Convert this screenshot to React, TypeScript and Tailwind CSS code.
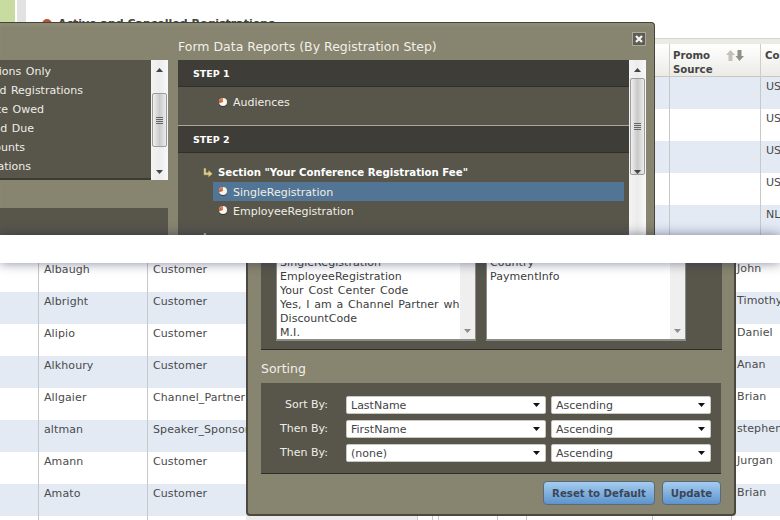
import React from "react";

function Pie() {
  return (
    <svg width="8" height="9" viewBox="0 0 8 9" className="shrink-0">
      <circle cx="4" cy="5" r="4" fill="#22211c" opacity="0.6" />
      <circle cx="4" cy="4" r="4" fill="#f8f6f0" />
      <path d="M4 4 L4 0 A4 4 0 0 0 0.2 5.2 Z" fill="#c9653a" />
      <path d="M4 4 L4 0 A4 4 0 0 0 0.9 1.5 Z" fill="#d97f52" />
    </svg>
  );
}

function CornerArrow() {
  return (
    <svg width="10" height="10" viewBox="0 0 10 10" className="shrink-0">
      <path d="M0.5 0 H3.2 V4.2 H5.2 V1.8 L9.8 5.8 L5.2 9.8 V7.2 H0.5 Z" fill="#d8c988" stroke="#4f4b36" strokeWidth="0.5" />
    </svg>
  );
}

function Tri({ up, color = "#555" }: { up?: boolean; color?: string }) {
  return (
    <svg width="7" height="4" viewBox="0 0 7 4">
      <path d={up ? "M3.5 0 L7 4 H0 Z" : "M0 0 H7 L3.5 4 Z"} fill={color} />
    </svg>
  );
}

function Scrollbar({ thumbTop, thumbH }: { thumbTop: number; thumbH: number }) {
  return (
    <div className="relative w-[17px] shrink-0 self-stretch bg-gradient-to-r from-[#f4f4f4] via-[#ececec] to-[#f8f8f8]">
      <div className="absolute left-[5px] top-[8px]">
        <Tri up color="#444" />
      </div>
      <div
        className="absolute left-[1px] flex w-[15px] flex-col items-center justify-center gap-[1px] rounded-[2px] border border-[#9b9b9b] bg-gradient-to-r from-[#f0f0f0] via-[#c9c9c9] to-[#ececec]"
        style={{ top: thumbTop, height: thumbH }}
      >
        <div className="h-px w-[7px] bg-[#666]" />
        <div className="h-px w-[7px] bg-[#666]" />
        <div className="h-px w-[7px] bg-[#666]" />
        <div className="h-px w-[7px] bg-[#666]" />
      </div>
      <div className="absolute left-[5px] top-[110px]">
        <Tri color="#444" />
      </div>
    </div>
  );
}

function SortArrows() {
  return (
    <svg width="18" height="11" viewBox="0 0 18 11" className="mt-[1px] shrink-0">
      <path d="M4.5 0 L9 5 H6.5 V11 H2.5 V5 H0 Z" fill="#c2c2b8" />
      <path d="M11.5 0 H15.5 V6 H18 L13.5 11 L9.5 6 H11.5 Z" fill="#8f8f88" />
    </svg>
  );
}

const leftItems: [string, string][] = [
  ["Active Registrations Only", "w-[51px]"],
  ["Cancelled Registrations", "w-[83px]"],
  ["Balance Owed", "w-[44px]"],
  ["Refund Due", "w-[34px]"],
  ["Discounts", "w-[25px]"],
  ["Cancellations", "w-[31px]"],
];

function TopTable() {
  const rows = ["US", "US", "US", "US", "NL", ""];
  return (
    <div className="ml-auto mt-[38px] w-[125px] shrink-0 text-[#4a4a4a]">
      <div className="h-[6px] border-t border-[#d6d6ce] bg-[#ebebe6]" />
      <div className="grid h-[33px] grid-cols-[15px_91px_1fr] border-b border-[#c8c8c0] bg-gradient-to-b from-white to-[#ecebe6] text-[10.2px] font-bold leading-[14px] text-[#444]">
        <div className="border-r border-[#cfcfc8]" />
        <div className="flex items-start justify-between border-r border-[#cfcfc8] pl-[3px] pr-[16px] pt-[5px]">
          <span className="w-[50px]">Promo Source</span>
          <SortArrows />
        </div>
        <div className="overflow-hidden pl-[4px] pt-[5px]">Country</div>
      </div>
      {rows.map((r, i) => (
        <div key={i} className={`grid h-[32px] grid-cols-[15px_91px_1fr] ${i % 2 === 0 ? "bg-[#e3eaf4]" : "bg-white"}`}>
          <div className="border-r border-[#c8c8c8]" />
          <div className="border-r border-[#c8c8c8]" />
          <div className="pl-[5px] pt-[3px]">{r}</div>
        </div>
      ))}
    </div>
  );
}

function TopModal() {
  return (
    <div className="absolute left-0 top-[22px] flex h-[213px] w-[655px] gap-[10px] rounded-tr-[4px] border-r border-t border-[#45443a] bg-[#87846f] pr-[8px] shadow-[inset_0_3px_3px_rgba(255,255,255,0.06)]">
      <button className="absolute right-[8px] top-[9px] flex h-[14px] w-[14px] items-center justify-center border border-[#aaa89a] bg-[#5f5d53]">
        <svg width="8" height="8" viewBox="0 0 8 8">
          <path d="M1 1 L7 7 M7 1 L1 7" stroke="#f2f2ee" strokeWidth="2.4" />
        </svg>
      </button>
      <div className="flex w-[168px] shrink-0 flex-col pt-[37px]">
        <div className="flex h-[120px] shrink-0 bg-white">
          <div className="flex-1 border-b-2 border-[#3c3b34] bg-[#58554b] pt-[2px] text-[#efeee6] [word-spacing:1px]">
            {leftItems.map(([t, w]) => (
              <div key={t} className={`flex h-[19px] items-center justify-end whitespace-nowrap ${w}`}>
                {t}
              </div>
            ))}
          </div>
          <Scrollbar thumbTop={33} thumbH={54} />
        </div>
        <div className="mt-[28px] flex-1 bg-[#58554b]" />
      </div>
      <div className="flex min-w-0 flex-1 flex-col">
        <div className="h-[37px] shrink-0 pt-[17px] text-[12.5px] leading-[14px] text-[#f1f0e8]">
          Form Data Reports (By Registration Step)
        </div>
        <div className="flex min-h-0 flex-1">
          <div className="min-w-0 flex-1 overflow-hidden bg-[#58554b] text-[#efeee6]">
            <div className="flex h-[27px] items-center border-b border-[#312f2a] bg-[#3f3d37] pl-[15px] text-[9.5px] font-bold text-white">STEP 1</div>
            <div className="flex h-[38px] items-center gap-[6px] pb-[8px] pl-[41px]">
              <Pie />
              <span>Audiences</span>
            </div>
            <div className="h-px bg-[#a9a799]" />
            <div className="flex h-[27px] items-center border-b border-[#312f2a] bg-[#3f3d37] pl-[15px] text-[9.5px] font-bold text-white">STEP 2</div>
            <div className="mt-[10px] flex h-[19px] items-center gap-[5px] pl-[25px] text-[10.2px] font-bold text-white">
              <CornerArrow />
              <span>Section "Your Conference Registration Fee"</span>
            </div>
            <div className="ml-[35px] mr-[5px] flex h-[19px] items-center gap-[6px] bg-[#527595] pl-[6px]">
              <Pie />
              <span className="pt-[1px]">SingleRegistration</span>
            </div>
            <div className="ml-[35px] mr-[5px] flex h-[19px] items-center gap-[6px] pl-[6px]">
              <Pie />
              <span className="pt-[1px]">EmployeeRegistration</span>
            </div>
            <div className="mt-[13px] pl-[25px]">
              <CornerArrow />
            </div>
          </div>
          <Scrollbar thumbTop={18} thumbH={97} />
        </div>
      </div>
    </div>
  );
}

const colClass = ["w-[39px]", "w-[109px]", "w-[270px]", "w-[15px]", "w-[6px]", "w-[59px]", "w-[29px]", "w-[126px]", "w-[79px]", "w-[48px]"];

const people = [
  ["Albaugh", "Customer", "John"],
  ["Albright", "Customer", "Timothy"],
  ["Alipio", "Customer", "Daniel"],
  ["Alkhoury", "Customer", "Anan"],
  ["Allgaier", "Channel_Partner", "Brian"],
  ["altman", "Speaker_Sponsor", "stephen"],
  ["Amann", "Customer", "Jurgan"],
  ["Amato", "Customer", "Brian"],
  ["", "", ""],
];

function BottomTable() {
  return (
    <div className="-mt-[3px] text-[#4a4a4a] tracking-[0.1px]">
      {people.map((p, i) => (
        <div key={i} className={`flex h-[32px] ${i % 2 === 1 ? "bg-[#e3eaf4]" : "bg-white"}`}>
          {colClass.map((c, j) => (
            <div key={j} className={`${c} shrink-0 overflow-hidden whitespace-nowrap ${j < 9 ? "border-r border-[#c8c8c8]" : ""} ${j === 9 ? "pl-[5px] pt-[2px]" : "pl-[5px] pt-[3px]"}`}>
              {j === 1 ? p[0] : j === 2 ? p[1] : j === 9 ? p[2] : ""}
            </div>
          ))}
        </div>
      ))}
    </div>
  );
}

function ListBox({ items }: { items: string[] }) {
  return (
    <div className="flex h-[91px] w-[200px] items-stretch border border-b-2 border-[#8b8b88] bg-white">
      <div className="min-w-0 flex-1 overflow-hidden whitespace-nowrap pl-[3px] pt-[5px] leading-[14px] tracking-[0.05px] text-[#3c3c3c] [word-spacing:1.2px]">
        {items.map((t) => (
          <div key={t} className="h-[14px]">{t}</div>
        ))}
      </div>
      <div className="flex w-[15px] shrink-0 items-end justify-center bg-[#efefef] pb-[6px]">
        <Tri color="#8d8d8d" />
      </div>
    </div>
  );
}

function SortSelect({ value, w }: { value: string; w: string }) {
  return (
    <div className={`flex h-[18px] ${w} items-center justify-between rounded-[2px] border border-[#c9c9c4] bg-white pl-[4px] pr-[5px] text-[#444]`}>
      <span>{value}</span>
      <svg width="7" height="4" viewBox="0 0 7 4">
        <path d="M0 0 H7 L3.5 4 Z" fill="#111" />
      </svg>
    </div>
  );
}

function SortRow({ label, value }: { label: string; value: string }) {
  return (
    <div className="flex h-[18px] items-center">
      <div className="w-[67px] pb-[2px] text-right text-[#efeee6]">{label}</div>
      <div className="ml-[18px]"><SortSelect value={value} w="w-[200px]" /></div>
      <div className="ml-[5px]"><SortSelect value="Ascending" w="w-[160px]" /></div>
    </div>
  );
}

function BottomModal() {
  return (
    <div className="absolute bottom-[4px] left-[246px] top-0 flex w-[490px] flex-col justify-end overflow-hidden rounded-b-[4px] border-x-2 border-b-2 border-x-[#4a493f] border-b-[#4a493f] bg-[#87846f] pl-[13px] pr-[13px]">
      <div className="-mr-[1px] flex shrink-0 gap-[10px] border-b border-[#2f2e29] bg-[#58554b] pb-[8px] pl-[15px]">
        <ListBox items={["SingleRegistration", "EmployeeRegistration", "Your Cost Center Code", "Yes, I am a Channel Partner wh", "DiscountCode", "M.I."]} />
        <ListBox items={["Country", "PaymentInfo"]} />
      </div>
      <div className="flex h-[33px] shrink-0 items-center pt-[3px] text-[12.5px] text-[#f1f0e8]">Sorting</div>
      <div className="flex shrink-0 flex-col gap-[6px] border-b border-[#2f2e29] bg-[#58554b] pb-[11px] pt-[13px]">
        <SortRow label="Sort By:" value="LastName" />
        <SortRow label="Then By:" value="FirstName" />
        <SortRow label="Then By:" value="(none)" />
      </div>
      <div className="flex shrink-0 justify-end gap-[7px] pb-[9px] pt-[7px] text-[10.2px]">
        <button className="h-[24px] w-[112px] rounded-[4px] border border-[#5c6a78] bg-gradient-to-b from-[#a5cdf0] to-[#5d94cc] font-bold text-[#3c4658]">Reset to Default</button>
        <button className="h-[24px] w-[59px] rounded-[4px] border border-[#5c6a78] bg-gradient-to-b from-[#a5cdf0] to-[#5d94cc] font-bold text-[#3c4658]">Update</button>
      </div>
    </div>
  );
}

export default function App() {
  return (
    <div className="flex h-[520px] w-[780px] flex-col overflow-hidden bg-white font-['DejaVu_Sans',sans-serif] text-[11px] leading-[13px]">
      <section className="relative flex h-[235px] shrink-0 items-start overflow-hidden">
        <div className="h-[22px] w-[15px] shrink-0 bg-[#c8dca2]" />
        <div className="ml-[2px] h-[22px] w-[9px] shrink-0 bg-[#e2e2e2]" />
        <div className="ml-[16px] flex shrink-0 items-center gap-[6px] whitespace-nowrap pt-[17px] text-[11px] font-bold text-[#444]">
          <span className="h-[10px] w-[10px] rounded-full bg-[#b8563a]" />
          Active and Cancelled Registrations
        </div>
        <TopTable />
        <TopModal />
      </section>
      <div className="relative z-10 h-[28px] shrink-0 bg-white shadow-[0_0_12px_rgba(30,35,70,0.55)]" />
      <section className="relative min-h-0 flex-1 overflow-hidden">
        <BottomTable />
        <div className="absolute bottom-0 left-[246px] h-[4px] w-[171px] bg-[#ececec]" />
        <BottomModal />
      </section>
    </div>
  );
}
